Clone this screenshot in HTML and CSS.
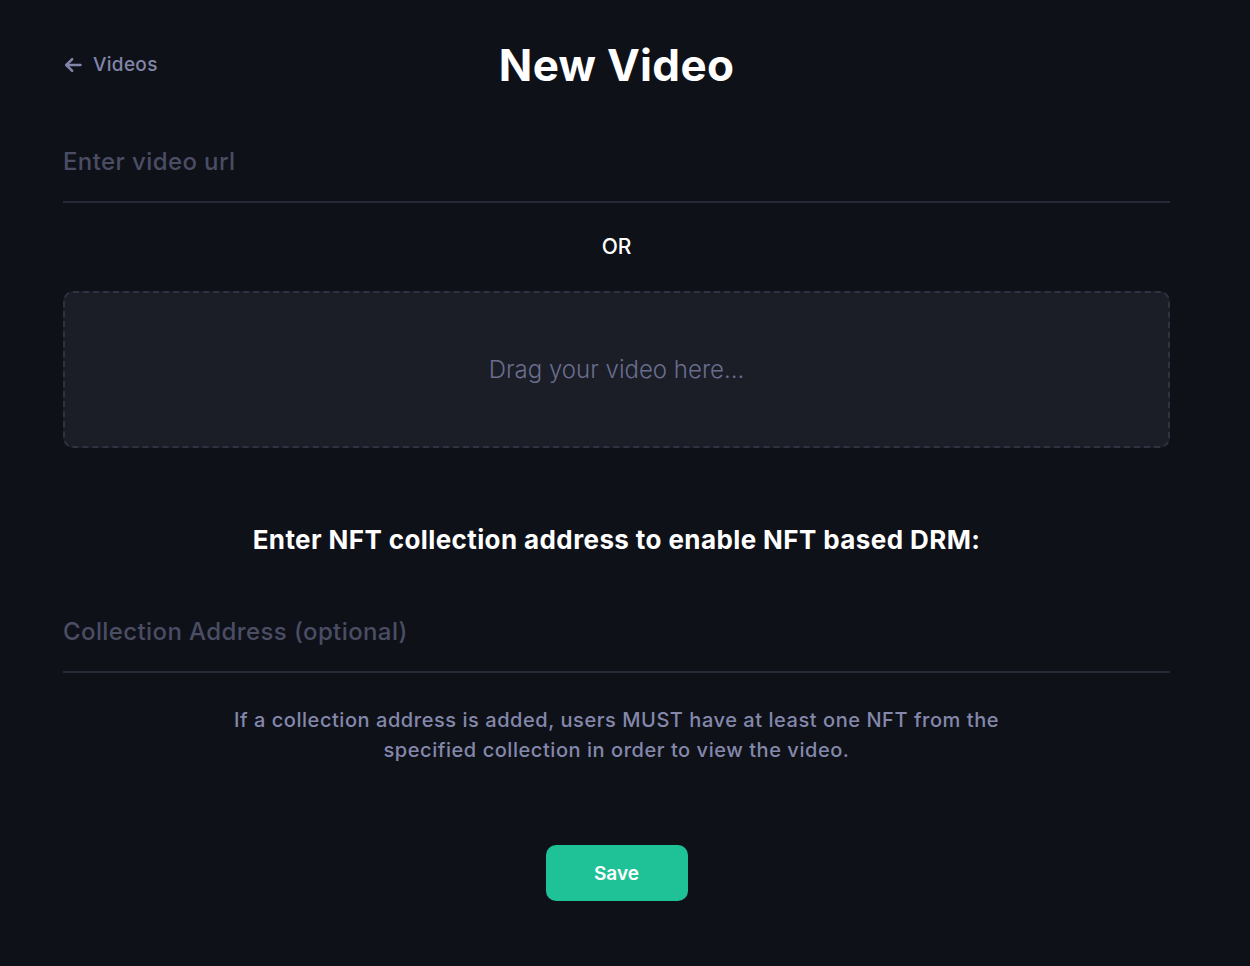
FILE: index.html
```html
<!DOCTYPE html>
<html>

<head>
  <title>New Video</title>
  <link rel="stylesheet" href="styles.css">
</head>

<body>
  <div class="page">
    <div class="top-bar">
      <a class="back-link" href="#">
        <svg class="back-icon" width="20" height="20" viewBox="0 0 24 24" fill="none" stroke="currentColor"
          stroke-width="3" stroke-linecap="round" stroke-linejoin="round">
          <path d="M21 12H4"></path>
          <path d="M11 5l-7 7 7 7"></path>
        </svg>
        Videos
      </a>
      <h1 class="title">New Video</h1>
    </div>

    <input type="text" class="line-input url-input" placeholder="Enter video url">

    <p class="or-text">OR</p>

    <div class="dropzone">Drag your video here...</div>

    <h2 class="nft-heading">Enter NFT collection address to enable NFT based DRM:</h2>

    <input type="text" class="line-input" placeholder="Collection Address (optional)">

    <p class="help-text">If a collection address is added, users MUST have at least one NFT from the specified
      collection in order to view the video.</p>

    <div class="actions">
      <button class="save-btn">Save</button>
    </div>
  </div>
</body>

</html>
```

FILE: styles.css
```css
* {
  font-family: Inter, "Noto Sans", sans-serif;
  box-sizing: border-box;
}

body {
  margin: 0;
  background-color: #0f1119;
  color: #ffffff;
}

.page {
  width: 1107px;
  margin-left: 63px;
  padding-top: 36px;
}

.top-bar {
  position: relative;
  height: 58px;
  display: flex;
  align-items: center;
  justify-content: center;
}

.back-link {
  position: absolute;
  left: 0;
  top: 17px;
  display: flex;
  align-items: center;
  gap: 10px;
  color: #8185a8;
  text-decoration: none;
  font-size: 19px;
  font-weight: 500;
  letter-spacing: 0.3px;
}

.title {
  margin: 0;
  font-size: 44px;
  font-weight: 700;
  letter-spacing: 0.3px;
}

.line-input {
  display: block;
  width: 100%;
  background: none;
  border: none;
  border-bottom: 2px solid #272a36;
  outline: 0;
  color: #ffffff;
  font-size: 24px;
  font-weight: 500;
  letter-spacing: 0.4px;
  padding: 28px 0 25px;
}

.line-input::placeholder {
  color: #4a4d64;
}

.url-input {
  margin-top: 25px;
}

.or-text {
  margin: 31px 0 32px;
  text-align: center;
  font-size: 21px;
  font-weight: 500;
}

.dropzone {
  height: 157px;
  display: flex;
  align-items: center;
  justify-content: center;
  background-color: #1b1d27;
  border: 2px dashed #2f3241;
  border-radius: 10px;
  color: #6a6e8e;
  font-size: 24px;
  font-weight: 300;
}

.nft-heading {
  margin: 76px 0 34px;
  text-align: center;
  font-size: 26px;
  font-weight: 700;
  letter-spacing: 0.4px;
}

.help-text {
  width: 800px;
  margin: 32px auto 0;
  text-align: center;
  color: #8488ab;
  font-size: 20px;
  font-weight: 500;
  letter-spacing: 0.55px;
  line-height: 30px;
}

.actions {
  display: flex;
  justify-content: center;
  margin-top: 80px;
}

.save-btn {
  width: 142px;
  height: 56px;
  background-color: #1fc296;
  color: white;
  border: none;
  border-radius: 10px;
  font-size: 19px;
  font-weight: 600;
  cursor: pointer;
}
```
